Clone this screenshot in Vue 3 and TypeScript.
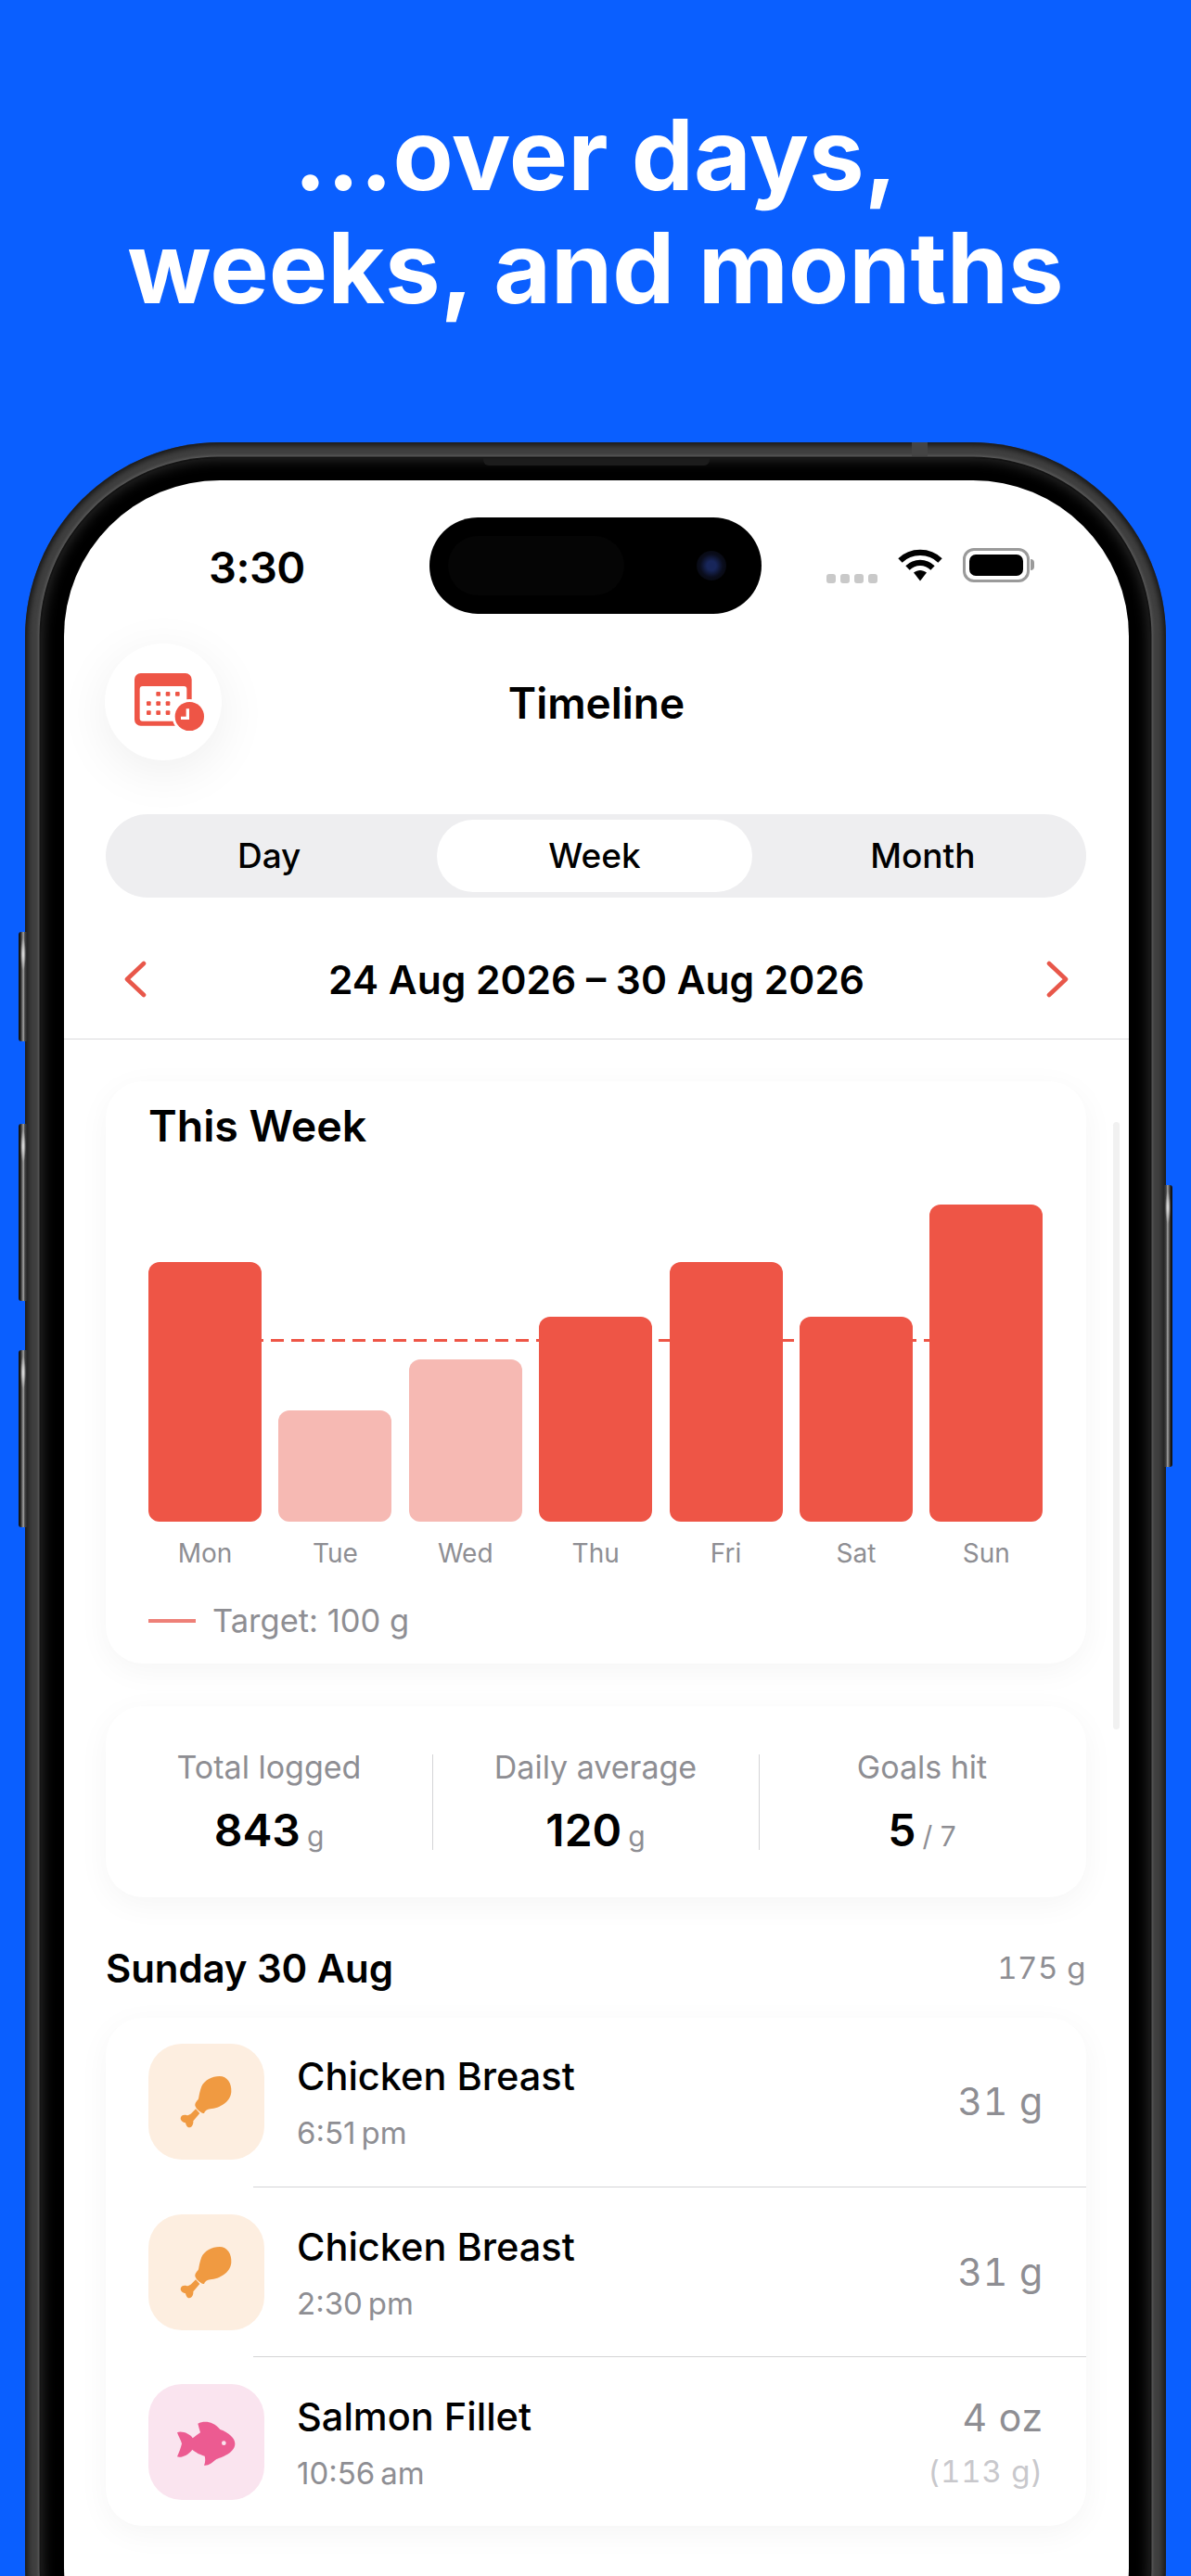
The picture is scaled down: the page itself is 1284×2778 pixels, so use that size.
<script setup lang="ts">
const bars = [
  { day: 'Mon', h: 280, hit: true },
  { day: 'Tue', h: 120, hit: false },
  { day: 'Wed', h: 175, hit: false },
  { day: 'Thu', h: 221, hit: true },
  { day: 'Fri', h: 280, hit: true },
  { day: 'Sat', h: 221, hit: true },
  { day: 'Sun', h: 342, hit: true },
]
const stats = [
  { label: 'Total logged', value: '843', unit: 'g' },
  { label: 'Daily average', value: '120', unit: 'g' },
  { label: 'Goals hit', value: '5', unit: '/ 7' },
]
const entries = [
  { name: 'Chicken Breast', time: '6:51\u202fpm', amount: '31 g', kind: 'meat' },
  { name: 'Chicken Breast', time: '2:30\u202fpm', amount: '31 g', kind: 'meat' },
  { name: 'Salmon Fillet', time: '10:56\u202fam', amount: '4 oz', sub: '(113 g)', kind: 'fish' },
]
const calendarDots: [number, number][] = [
  [332, 262], [363, 262], [394, 262],
  [301, 293], [332, 293], [363, 293],
  [301, 323], [332, 323], [363, 323],
]
</script>

<template>
  <div class="page">
    <h1 class="headline">…over days,<br />weeks, and months</h1>

    <div class="device">
      <i class="btn b1"></i><i class="btn b2"></i><i class="btn b3"></i><i class="btn b4"></i>
      <i class="antenna"></i>
      <div class="metal">
        <div class="bezel">
          <i class="speaker"></i>
          <div class="screen">
            <div class="island"><i class="island-sensor"></i><i class="island-cam"></i></div>
            <i class="scrollbar"></i>

            <div class="status">
              <span class="clock">3:30</span>
              <div class="status-right">
                <div class="signal"><i></i><i></i><i></i><i></i></div>
                <svg class="wifi" viewBox="0 0 48 36" fill="none" stroke="#000" stroke-width="6.2">
                  <path d="M2.5 13.5C14 2 34 2 45.5 13.5" />
                  <path d="M10.5 21.5C18 14 30 14 37.5 21.5" />
                  <path d="M17 26.5L24 35.5L31 26.5C26.5 23 21.5 23 17 26.5Z" fill="#000" stroke="none" />
                </svg>
                <div class="battery"><div class="battery-fill"></div></div>
                <i class="battery-tip"></i>
              </div>
            </div>

            <header class="nav">
              <div class="round-btn">
                <svg width="75" height="62" viewBox="255 195 225 186">
                  <rect x="255" y="195" width="185" height="170" rx="20" fill="#ee5546" />
                  <rect x="272" y="237" width="152" height="113" rx="9" fill="#fff" />
                  <rect v-for="d in calendarDots" :key="d.join()" :x="d[0] - 7" :y="d[1] - 7" width="14" height="14" rx="3" fill="#ee5546" />
                  <circle cx="433" cy="335" r="56" fill="#fff" />
                  <circle cx="433" cy="335" r="47" fill="#ee5546" />
                  <path d="M427 310V340H405" fill="none" stroke="#fff" stroke-width="10" />
                </svg>
              </div>
              <h2 class="nav-title">Timeline</h2>
            </header>

            <div class="segment">
              <span>Day</span>
              <span class="active">Week</span>
              <span>Month</span>
            </div>

            <div class="range">
              <svg width="26" height="40" viewBox="0 0 26 40" fill="none" stroke="#e8574a" stroke-width="4.6" stroke-linecap="round" stroke-linejoin="round"><path d="M22 3L4 20L22 37" /></svg>
              <span>24 Aug 2026 – 30 Aug 2026</span>
              <svg width="26" height="40" viewBox="0 0 26 40" fill="none" stroke="#e8574a" stroke-width="4.6" stroke-linecap="round" stroke-linejoin="round"><path d="M4 3L22 20L4 37" /></svg>
            </div>

            <main class="content">
              <section class="card chart-card">
                <h3 class="chart-title">This Week</h3>
                <div class="chart">
                  <i class="target-line"></i>
                  <div v-for="b in bars" :key="b.day" class="col">
                    <div class="bar" :class="{ low: !b.hit }" :style="{ height: b.h + 'px' }"></div>
                    <span class="day">{{ b.day }}</span>
                  </div>
                </div>
                <div class="legend"><i></i><span>Target: 100 g</span></div>
              </section>

              <section class="card stats">
                <div v-for="s in stats" :key="s.label" class="stat">
                  <span class="stat-label">{{ s.label }}</span>
                  <span class="stat-value">{{ s.value }}<small>{{ s.unit }}</small></span>
                </div>
              </section>

              <div class="day-head">
                <span class="day-name">Sunday 30 Aug</span>
                <span class="day-total">175 g</span>
              </div>

              <section class="card list">
                <div v-for="e in entries" :key="e.time" class="row">
                  <div class="food" :class="e.kind">
                    <svg v-if="e.kind === 'meat'" width="125" height="125" viewBox="90 72 375 375">
                      <path fill="#f09a41" d="M320 177C345 177 360 200 358 228C355 262 320 280 290 283C280 284 272 290 270 297C262 297 245 285 241 272C240 262 248 258 252 250C254 240 256 225 262 210C272 190 295 177 320 177Z" />
                      <path fill="#f09a41" d="M243 283L256 297L235 322C236 330 232 343 222 343C214 343 212 335 210 328C203 327 194 322 194 313C195 303 205 301 213 303C220 305 225 303 243 283Z" />
                    </svg>
                    <svg v-else width="125" height="125" viewBox="90 65 375 375">
                      <path fill="#ec5b91" d="M183 222C195 215 225 225 233 240C240 235 250 228 258 222C255 212 252 200 250 193C270 183 300 185 322 212C350 222 370 240 370 258C370 285 335 300 310 308C295 320 285 330 270 328C275 318 274 305 272 298C260 295 240 285 232 277C220 295 195 305 183 300C190 285 195 270 198 258C195 245 187 235 183 222Z" />
                      <circle cx="334" cy="256" r="7" fill="#fae4ef" />
                    </svg>
                  </div>
                  <div class="row-text">
                    <span class="row-name">{{ e.name }}</span>
                    <span class="row-time">{{ e.time }}</span>
                  </div>
                  <div class="row-amount">
                    <span>{{ e.amount }}</span>
                    <small v-if="e.sub">{{ e.sub }}</small>
                  </div>
                </div>
              </section>
            </main>
          </div>
        </div>
      </div>
    </div>
  </div>
</template>

<style>
html, body { margin: 0; background: #0a5fff; }
</style>

<style scoped>
* { box-sizing: border-box; }
.page {
  position: relative;
  width: 1284px;
  height: 2778px;
  overflow: hidden;
  background: #0a5fff;
  font-family: Inter, "Liberation Sans", sans-serif;
  color: #000;
}
.headline {
  margin: 0;
  height: 477px;
  padding-top: 106px;
  text-align: center;
  color: #fff;
  font-size: 106.5px;
  line-height: 122px;
  font-weight: 700;
}
.device { position: relative; margin-left: 27px; width: 1230px; height: 2500px; }
.btn {
  position: absolute;
  width: 9px;
  border-radius: 3px 0 0 3px;
  background:
    radial-gradient(ellipse 3px 18px at 55% 24px, #e4e4e4, transparent),
    linear-gradient(90deg, #151515 0 18%, #6a6a6a 45%, #a8a8a8 58%, #444 75%, #2a2a2a);
}
.b1 { left: -7px; top: 528px; height: 118px; }
.b2 { left: -7px; top: 735px; height: 191px; }
.b3 { left: -7px; top: 979px; height: 191px; }
.b4 {
  right: -7px;
  top: 801px;
  height: 304px;
  border-radius: 0 3px 3px 0;
  background:
    radial-gradient(ellipse 3px 18px at 45% 24px, #e4e4e4, transparent),
    linear-gradient(270deg, #151515 0 18%, #6a6a6a 45%, #a8a8a8 58%, #444 75%, #2a2a2a);
}
.antenna { position: absolute; z-index: 2; left: 956px; top: 0; width: 17px; height: 15px; background: #444; }
.metal {
  height: 100%;
  padding: 17px;
  border-radius: 210px;
  background: #404040;
  box-shadow: inset 0 0 6px 3px #141414;
}
.bezel {
  position: relative;
  height: 100%;
  padding: 24px 23px 24px 25px;
  border-radius: 192px;
  background: #000;
  box-shadow: 0 0 0 1.5px #141414, 0 0 3px 3px #5c5c5c, inset 0 0 14px 2px #2a2a2a;
}
.speaker { position: absolute; left: 477px; top: 0; width: 244px; height: 8px; background: #1c1c1c; border-radius: 0 0 6px 6px; }
.screen { position: relative; height: 100%; background: #fff; border-radius: 168px; overflow: hidden; }
.island { position: absolute; left: 394px; top: 40px; width: 358px; height: 104px; border-radius: 52px; background: #000; }
.island-sensor { position: absolute; left: 20px; top: 20px; width: 190px; height: 64px; border-radius: 32px; background: #050505; }
.island-cam { position: absolute; left: 288px; top: 36px; width: 32px; height: 32px; border-radius: 50%; background: radial-gradient(circle, #18265a 0 22%, #0a0d1c 55%, #040404 100%); }
.scrollbar { position: absolute; left: 1131px; top: 692px; width: 7px; height: 655px; border-radius: 4px; background: #f1f1f1; }

.status { position: relative; height: 176px; }
.clock { position: absolute; left: 156px; top: 62px; font-size: 47px; line-height: 64px; font-weight: 600; letter-spacing: -0.5px; }
.status-right { position: absolute; left: 822px; top: 73px; display: flex; align-items: flex-start; }
.signal { display: flex; gap: 5px; margin-top: 28px; }
.signal i { width: 10px; height: 10px; border-radius: 3px; background: #c9c9c9; }
.wifi { width: 48px; height: 36px; margin-left: 22px; }
.battery { width: 72px; height: 37px; margin-left: 22px; padding: 4px; border: 3px solid #9a9a9a; border-radius: 12px; }
.battery-fill { width: 100%; height: 100%; border-radius: 7px; background: #000; }
.battery-tip { width: 4px; height: 12px; margin: 12px 0 0 1px; background: #9a9a9a; border-radius: 0 4px 4px 0; }

.nav { position: relative; height: 184px; padding-left: 44px; }
.round-btn {
  display: flex;
  align-items: center;
  justify-content: center;
  width: 126px;
  height: 126px;
  padding-left: 12px;
  border-radius: 50%;
  background: #fff;
  box-shadow: 0 12px 56px rgba(0, 0, 0, 0.07);
}
.nav-title {
  position: absolute;
  left: 0;
  right: 0;
  top: 34px;
  margin: 0;
  text-align: center;
  font-size: 46px;
  line-height: 60px;
  font-weight: 600;
}
.segment {
  display: grid;
  grid-template-columns: 1fr 1fr 1fr;
  align-items: center;
  height: 90px;
  margin: 0 46px 0 45px;
  padding: 6px 0;
  border-radius: 45px;
  background: #eeeef0;
  font-size: 37px;
  font-weight: 450;
  text-align: center;
}
.segment span { line-height: 78px; }
.segment .active { margin: 0 8px 0 5px; background: #fff; border-radius: 39px; }
.range {
  display: flex;
  align-items: center;
  justify-content: space-between;
  height: 153px;
  padding: 24px 64px 0 64px;
  border-bottom: 1.5px solid #dbdbdd;
  font-size: 42.5px;
  font-weight: 600;
}
.content { padding: 45px 46px 0 45px; }
.card { background: #fff; border-radius: 40px; box-shadow: 0 8px 34px rgba(0, 0, 0, 0.045); }
.chart-card { height: 628px; padding: 20px 46px 0; }
.chart-title { margin: 0; font-size: 46.5px; line-height: 56px; font-weight: 600; }
.chart { position: relative; display: flex; align-items: flex-end; gap: 18.4px; height: 450px; }
.target-line {
  position: absolute;
  left: 0;
  right: 20px;
  top: 202px;
  height: 3px;
  background: repeating-linear-gradient(90deg, #ee5546 0 14px, transparent 14px 22px);
}
.col { position: relative; display: flex; flex-direction: column; align-items: center; width: 122px; }
.bar { width: 100%; border-radius: 12px; background: #ee5546; }
.bar.low { background: #f6b9b3; }
.day { margin-top: 17px; font-size: 28px; line-height: 34px; color: #8e8e93; }
.legend { display: flex; align-items: center; gap: 18px; margin-top: 34px; font-size: 34.5px; line-height: 44px; color: #8e8e93; }
.legend i { width: 51px; height: 4px; background: #ee8078; }
.stats { display: flex; height: 206px; margin-top: 46px; padding: 46px 0 0 0; }
.stat { position: relative; display: flex; flex-direction: column; align-items: center; width: 352px; }
.stat + .stat::before {
  content: "";
  position: absolute;
  left: 0;
  top: 6px;
  height: 103px;
  border-left: 1.5px solid #d4d4d6;
}
.stat-label { font-size: 34px; line-height: 40px; color: #8e8e93; }
.stat-value { margin-top: 18px; font-size: 48px; line-height: 60px; font-weight: 600; }
.stat-value small { margin-left: 7px; font-size: 30px; font-weight: 400; color: #8e8e93; }
.day-head { display: flex; align-items: center; justify-content: space-between; height: 130px; padding-top: 22px; }
.day-name { font-size: 42px; font-weight: 600; letter-spacing: -0.1px; }
.day-total { font-size: 33px; letter-spacing: 0.5px; color: #8e8e93; font-variant-numeric: tabular-nums; }
.list { height: 548px; padding-top: 28px; }
.row { position: relative; display: flex; height: 183.5px; padding: 0 46px; }
.row + .row::before {
  content: "";
  position: absolute;
  left: 159px;
  right: 0;
  top: -30px;
  border-top: 1.5px solid #d4d4d6;
}
.food { flex: none; width: 125px; height: 125px; border-radius: 36px; }
.food svg { display: block; }
.food.meat { background: #fdeee0; }
.food.fish { background: #fae4ef; }
.row-text { display: flex; flex-direction: column; margin-left: 35px; }
.row-name { font-size: 41.5px; line-height: 58px; font-weight: 500; margin-top: 6px; }
.row-time { margin-top: 10px; font-size: 33px; line-height: 44px; color: #8e8e93; }
.row-amount { display: flex; flex-direction: column; align-items: flex-end; margin-left: auto; padding-top: 38px; font-size: 41px; line-height: 48px; letter-spacing: 0.8px; color: #8e8e93; font-variant-numeric: tabular-nums; }
.row-amount small { margin-top: 12px; font-size: 33px; line-height: 44px; letter-spacing: 0.8px; color: #c8c8cc; }
.row:last-child .row-amount { padding-top: 12px; }
</style>
